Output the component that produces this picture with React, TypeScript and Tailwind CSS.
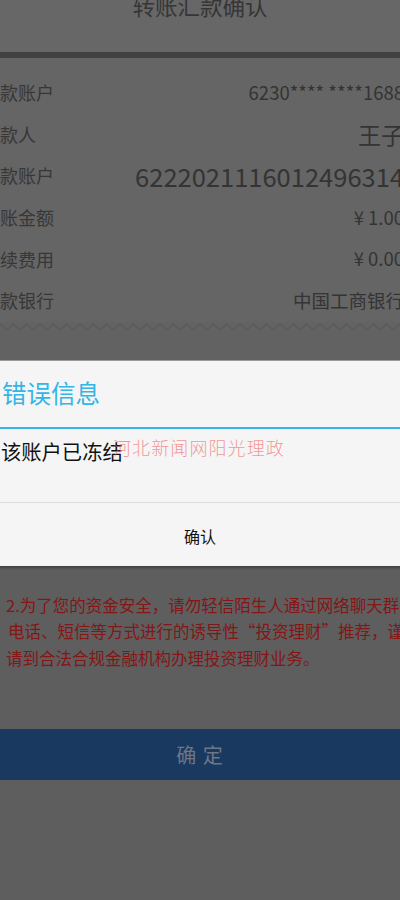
// Transfer confirm page, dimmed behind an "error" dialog
const rows = [
  { label: '付款账户', value: '6230**** ****1688', size: 'text-[18.5px]' },
  { label: '收款人', value: '王子', size: 'text-[23px]' },
  { label: '收款账户', value: '6222021116012496314', size: 'text-[25.5px]' },
  { label: '转账金额', value: '¥ 1.00', size: 'text-[18.5px]' },
  { label: '手续费用', value: '¥ 0.00', size: 'text-[18.5px]' },
  { label: '收款银行', value: '中国工商银行', size: 'text-[18.5px]' },
]

const font = { fontFamily: '"Noto Sans CJK SC", "Noto Sans", sans-serif' }

function Zigzag() {
  const teeth = 31
  const step = 400 / 30
  let d = 'M0 2'
  for (let i = 0; i < teeth; i++) {
    d += ` L${i * step + step / 2} 8 L${(i + 1) * step} 2`
  }
  return (
    <svg width="400" height="10" viewBox="0 0 400 10" className="block">
      <path d={d} fill="none" stroke="#5b5b5b" strokeWidth="1.5" />
    </svg>
  )
}

export default function App() {
  return (
    <div className="w-[400px] h-[900px] overflow-hidden bg-[#5e5e5e] flex flex-col" style={font}>
      {/* Header */}
      <div className="h-[58px] bg-[#676767] border-b-[6px] border-[#414141] flex justify-center">
        <h1 className="text-[22.5px] leading-[23px] -mt-[6px] text-[#363636] font-normal">转账汇款确认</h1>
      </div>

      {/* Detail card */}
      <div className="bg-[#656565] overflow-hidden pt-[14px]">
        {rows.map((r) => (
          <div key={r.label} className="h-[41.6px] flex items-center justify-between -ml-[18px] -mr-[4px]">
            <span className="text-[18px] text-[#373737] whitespace-nowrap">{r.label}</span>
            <span className={`${r.size} text-[#343434] whitespace-nowrap`}>{r.value}</span>
          </div>
        ))}
      </div>
      <div className="bg-[#636363]">
        <Zigzag />
      </div>
      <div className="h-[29px] bg-[#626262] border-b border-[#9a9a9a]" />

      {/* Error dialog */}
      <div className="bg-[#f5f5f5] h-[205px] flex flex-col">
        <div className="h-[66px] flex items-center pl-[2px]">
          <span className="text-[24.5px] text-[#33b5e5]">错误信息</span>
        </div>
        <div className="h-[2px] bg-[#33b5e5]" />
        <div className="h-[74px] border-b border-[#dcdcdc] flex items-start pt-[9px] pl-[1px] relative">
          <span className="text-[20.3px] text-[#111] leading-[26px]">该账户已冻结</span>
          <span className="absolute left-[113px] top-[5px] text-[18px] tracking-[1.1px] text-[#f06b6b]/70 font-light whitespace-nowrap">
            河北新闻网阳光理政
          </span>
        </div>
        <div className="flex-1 flex items-center justify-center pt-[4px]">
          <span className="text-[16px] text-[#111]">确认</span>
        </div>
      </div>
      <div className="h-[4px] bg-gradient-to-b from-[#3e3e3e] to-[#5e5e5e]" />

      {/* Notice */}
      <div className="pt-[22px] overflow-hidden text-[16.5px] leading-[26.5px] text-[#841616] whitespace-nowrap">
        <p className="pl-[6px]">2.为了您的资金安全，请勿轻信陌生人通过网络聊天群、</p>
        <p className="pl-[8px]">电话、短信等方式进行的诱导性“投资理财”推荐，谨防上当受骗，</p>
        <p className="pl-[6px]">请到合法合规金融机构办理投资理财业务。</p>
      </div>

      {/* Confirm button */}
      <div className="mt-[58px] h-[51px] bg-[#1a3961] flex items-center justify-center">
        <span className="text-[20px] text-[#6f7683] tracking-[1px]">确 定</span>
      </div>
    </div>
  )
}
